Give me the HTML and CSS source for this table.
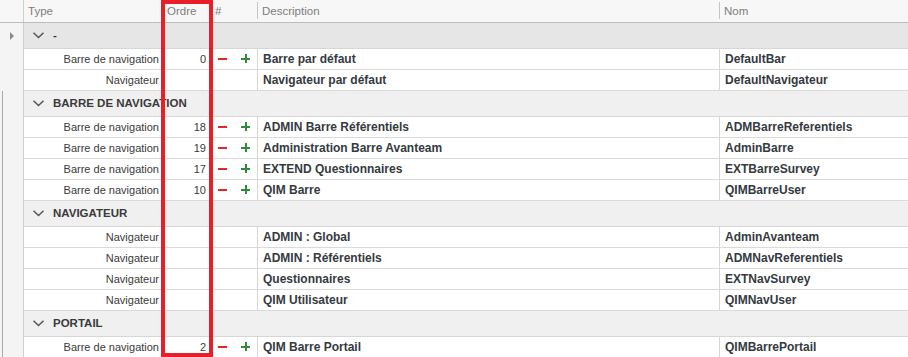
FILE: index.html
```html
<!DOCTYPE html>
<html lang="fr">
<head>
<meta charset="utf-8">
<title>Grille</title>
<link rel="stylesheet" href="styles.css">
</head>
<body>
<div class="grid">
  <div class="row head">
    <div class="ind"></div>
    <div class="c type">Type</div>
    <div class="c ordre">Ordre</div>
    <div class="c hash">#</div>
    <div class="c desc sep">Description</div>
    <div class="c nom sep">Nom</div>
  </div>

  <div class="row group focus">
    <div class="ind"><span class="tri"></span></div>
    <div class="gcell"><svg class="chev" width="11" height="7" viewBox="0 0 11 7"><polyline points="0.5,0.8 5.5,5.5 10.5,0.8" fill="none" stroke="#555" stroke-width="1.5"/></svg><span class="gt">-</span></div>
  </div>
  <div class="row data">
    <div class="ind"></div>
    <div class="c type">Barre de navigation</div>
    <div class="c ordre">0</div>
    <div class="c hash"><span class="minus"></span><span class="plus"></span></div>
    <div class="c desc line">Barre par défaut</div>
    <div class="c nom line">DefaultBar</div>
  </div>
  <div class="row data">
    <div class="ind"></div>
    <div class="c type">Navigateur</div>
    <div class="c ordre"></div>
    <div class="c hash"></div>
    <div class="c desc line">Navigateur par défaut</div>
    <div class="c nom line">DefaultNavigateur</div>
  </div>

  <div class="row group edge">
    <div class="ind"></div>
    <div class="gcell"><svg class="chev" width="11" height="7" viewBox="0 0 11 7"><polyline points="0.5,0.8 5.5,5.5 10.5,0.8" fill="none" stroke="#555" stroke-width="1.5"/></svg><span class="gt">BARRE DE NAVIGATION</span></div>
  </div>
  <div class="row data edge">
    <div class="ind"></div>
    <div class="c type">Barre de navigation</div>
    <div class="c ordre">18</div>
    <div class="c hash"><span class="minus"></span><span class="plus"></span></div>
    <div class="c desc line">ADMIN Barre Référentiels</div>
    <div class="c nom line">ADMBarreReferentiels</div>
  </div>
  <div class="row data edge">
    <div class="ind"></div>
    <div class="c type">Barre de navigation</div>
    <div class="c ordre">19</div>
    <div class="c hash"><span class="minus"></span><span class="plus"></span></div>
    <div class="c desc line">Administration Barre Avanteam</div>
    <div class="c nom line">AdminBarre</div>
  </div>
  <div class="row data edge">
    <div class="ind"></div>
    <div class="c type">Barre de navigation</div>
    <div class="c ordre">17</div>
    <div class="c hash"><span class="minus"></span><span class="plus"></span></div>
    <div class="c desc line">EXTEND Questionnaires</div>
    <div class="c nom line">EXTBarreSurvey</div>
  </div>
  <div class="row data edge">
    <div class="ind"></div>
    <div class="c type">Barre de navigation</div>
    <div class="c ordre">10</div>
    <div class="c hash"><span class="minus"></span><span class="plus"></span></div>
    <div class="c desc line">QIM Barre</div>
    <div class="c nom line">QIMBarreUser</div>
  </div>

  <div class="row group edge">
    <div class="ind"></div>
    <div class="gcell"><svg class="chev" width="11" height="7" viewBox="0 0 11 7"><polyline points="0.5,0.8 5.5,5.5 10.5,0.8" fill="none" stroke="#555" stroke-width="1.5"/></svg><span class="gt">NAVIGATEUR</span></div>
  </div>
  <div class="row data edge">
    <div class="ind"></div>
    <div class="c type">Navigateur</div>
    <div class="c ordre"></div>
    <div class="c hash"></div>
    <div class="c desc line">ADMIN : Global</div>
    <div class="c nom line">AdminAvanteam</div>
  </div>
  <div class="row data edge">
    <div class="ind"></div>
    <div class="c type">Navigateur</div>
    <div class="c ordre"></div>
    <div class="c hash"></div>
    <div class="c desc line">ADMIN : Référentiels</div>
    <div class="c nom line">ADMNavReferentiels</div>
  </div>
  <div class="row data edge">
    <div class="ind"></div>
    <div class="c type">Navigateur</div>
    <div class="c ordre"></div>
    <div class="c hash"></div>
    <div class="c desc line">Questionnaires</div>
    <div class="c nom line">EXTNavSurvey</div>
  </div>
  <div class="row data edge">
    <div class="ind"></div>
    <div class="c type">Navigateur</div>
    <div class="c ordre"></div>
    <div class="c hash"></div>
    <div class="c desc line">QIM Utilisateur</div>
    <div class="c nom line">QIMNavUser</div>
  </div>

  <div class="row group edge">
    <div class="ind"></div>
    <div class="gcell"><svg class="chev" width="11" height="7" viewBox="0 0 11 7"><polyline points="0.5,0.8 5.5,5.5 10.5,0.8" fill="none" stroke="#555" stroke-width="1.5"/></svg><span class="gt">PORTAIL</span></div>
  </div>
  <div class="row data edge">
    <div class="ind"></div>
    <div class="c type">Barre de navigation</div>
    <div class="c ordre">2</div>
    <div class="c hash"><span class="minus"></span><span class="plus"></span></div>
    <div class="c desc line">QIM Barre Portail</div>
    <div class="c nom line">QIMBarrePortail</div>
  </div>

  <div class="highlight"></div>
</div>
</body>
</html>
```

FILE: styles.css
```css
html, body {
  margin: 0;
  padding: 0;
  background: #ffffff;
  overflow: hidden;
}

.grid {
  position: relative;
  width: 908px;
  height: 357px;
  overflow: hidden;
  font-family: "Liberation Sans", Arial, sans-serif;
  font-size: 11px;
  color: #333333;
}

.row {
  display: grid;
  grid-template-columns: 24px 138px 48px 47px 462px 1fr;
}
.row > * { box-sizing: border-box; }
.data > :not(.ind) { border-bottom: 1px solid #dadada; }
.group > :not(.ind) { border-bottom: 1px solid #d6d6d6; }

.ind {
  border-right: 1px solid #cfcfcf;
  background: #f4f4f4;
  display: flex;
  align-items: center;
  justify-content: center;
}
.edge .ind {
  background: linear-gradient(90deg, #f4f4f4 0 2px, #a9a9a9 2px 3px, #f4f4f4 3px);
}

.c {
  display: flex;
  align-items: center;
  white-space: nowrap;
  overflow: hidden;
}

/* header */
.head {
  height: 23px;
  background: #f7f7f7;
  border-bottom: 1px solid #bdbdbd;
  box-sizing: border-box;
  color: #7d7d7d;
  font-size: 11.5px;
}
.head .ind { background: #f7f7f7; }
.head .type { padding-left: 4px; }
.head .ordre { padding-left: 5px; }
.head .hash { padding-left: 5px; }
.head .sep { position: relative; padding-left: 5px; }
.head .sep::before {
  content: "";
  position: absolute;
  left: 0;
  top: 2px;
  bottom: 3px;
  width: 1px;
  background: #c4c4c4;
}

/* group rows */
.group {
  height: 26px;
  grid-template-columns: 24px 1fr;
}
.gcell {
  display: flex;
  align-items: center;
  background: #f0f0f0;
  font-weight: bold;
  font-size: 11.5px;
  color: #3a3a3a;
  padding-left: 9px;
}
.focus .gcell { background: #e6e6e6; }

.chev {
  display: block;
  margin: 0 9px 0 0;
}
.gt { line-height: 1; }

.tri {
  width: 0;
  height: 0;
  border-top: 4px solid transparent;
  border-bottom: 4px solid transparent;
  border-left: 4px solid #8a8a8a;
}

/* data rows */
.data { height: 21px; }
.data .type { justify-content: flex-end; padding-right: 3px; color: #3a3a3a; }
.data .ordre { justify-content: flex-end; padding-right: 4px; color: #3a3a3a; }
.data .desc, .data .nom {
  font-weight: bold;
  font-size: 12px;
  padding-left: 5px;
  color: #343a40;
}
.line { border-left: 1px solid #d6d6d6; }

.hash { position: relative; }
.minus {
  position: absolute;
  left: 8px;
  top: 9px;
  width: 9px;
  height: 2px;
  background: #e3262b;
}
.plus {
  position: absolute;
  left: 31px;
  top: 5px;
  width: 9px;
  height: 9px;
  background:
    linear-gradient(#2e8b3c, #2e8b3c) center / 9px 2px no-repeat,
    linear-gradient(#2e8b3c, #2e8b3c) center / 2px 9px no-repeat;
}

/* red highlight frame over Ordre column */
.highlight {
  position: absolute;
  left: 161px;
  top: 0;
  width: 52px;
  height: 357px;
  box-sizing: border-box;
  border: 4px solid #e81f28;
  pointer-events: none;
}
```
